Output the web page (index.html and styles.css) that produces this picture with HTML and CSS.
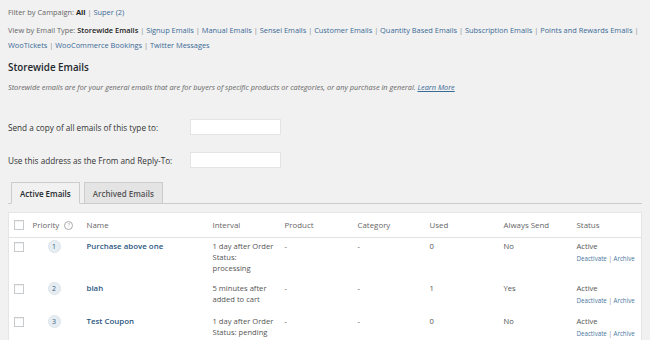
FILE: index.html
```html
<!DOCTYPE html>
<html lang="en">

<head>
    <meta charset="UTF-8" />
    <title>Follow-up Emails</title>
    <link rel="stylesheet" href="styles.css">
</head>

<body>
    <div class="wrap">
        <p class="filter">Filter by Campaign: <strong>All</strong> <span class="sep">|</span> <a href="#">Super (2)</a></p>

        <p class="types">View by Email Type: <strong>Storewide Emails</strong> <span class="sep">|</span>
            <a href="#">Signup Emails</a> <span class="sep">|</span>
            <a href="#">Manual Emails</a> <span class="sep">|</span>
            <a href="#">Sensei Emails</a> <span class="sep">|</span>
            <a href="#">Customer Emails</a> <span class="sep">|</span>
            <a href="#">Quantity Based Emails</a> <span class="sep">|</span>
            <a href="#">Subscription Emails</a> <span class="sep">|</span>
            <a href="#">Points and Rewards Emails</a> <span class="sep">|</span>
            <a href="#">WooTickets</a> <span class="sep">|</span>
            <a href="#">WooCommerce Bookings</a> <span class="sep">|</span>
            <a href="#">Twitter Messages</a>
        </p>

        <h3>Storewide Emails</h3>
        <p class="desc"><em>Storewide emails are for your general emails that are for buyers of specific products or categories, or any purchase in general.</em> <a href="#">Learn More</a></p>

        <div class="field first">
            <label for="bcc">Send a copy of all emails of this type to:</label>
            <input type="text" id="bcc" />
        </div>
        <div class="field">
            <label for="from">Use this address as the From and Reply-To:</label>
            <input type="text" id="from" />
        </div>

        <nav class="tabs">
            <a href="#" class="tab active">Active Emails</a>
            <a href="#" class="tab">Archived Emails</a>
        </nav>

        <table class="emails">
            <colgroup>
                <col style="width: 24px">
                <col style="width: 54px">
                <col style="width: 126px">
                <col style="width: 72px">
                <col style="width: 73px">
                <col style="width: 72px">
                <col style="width: 74px">
                <col style="width: 73px">
                <col>
            </colgroup>
            <thead>
                <tr>
                    <th class="check"><span class="box"></span></th>
                    <th>Priority <span class="help">?</span></th>
                    <th>Name</th>
                    <th>Interval</th>
                    <th>Product</th>
                    <th>Category</th>
                    <th>Used</th>
                    <th>Always Send</th>
                    <th>Status</th>
                </tr>
            </thead>
            <tbody>
                <tr>
                    <td class="check"><span class="box"></span></td>
                    <td><span class="prio">1</span></td>
                    <td><a href="#" class="name">Purchase above one</a></td>
                    <td class="interval">1 day after Order Status: processing</td>
                    <td class="dash">-</td>
                    <td class="dash">-</td>
                    <td>0</td>
                    <td>No</td>
                    <td>Active<div class="actions"><a href="#">Deactivate</a> <span class="sep">|</span> <a href="#">Archive</a></div></td>
                </tr>
                <tr>
                    <td class="check"><span class="box"></span></td>
                    <td><span class="prio">2</span></td>
                    <td><a href="#" class="name">blah</a></td>
                    <td class="interval">5 minutes after added to cart</td>
                    <td class="dash">-</td>
                    <td class="dash">-</td>
                    <td>1</td>
                    <td>Yes</td>
                    <td>Active<div class="actions"><a href="#">Deactivate</a> <span class="sep">|</span> <a href="#">Archive</a></div></td>
                </tr>
                <tr>
                    <td class="check"><span class="box"></span></td>
                    <td><span class="prio">3</span></td>
                    <td><a href="#" class="name">Test Coupon</a></td>
                    <td class="interval">1 day after Order Status: pending</td>
                    <td class="dash">-</td>
                    <td class="dash">-</td>
                    <td>0</td>
                    <td>No</td>
                    <td>Active<div class="actions"><a href="#">Deactivate</a> <span class="sep">|</span> <a href="#">Archive</a></div></td>
                </tr>
            </tbody>
        </table>
    </div>
</body>

</html>
```

FILE: styles.css
```css
html,
body {
    overflow: hidden;
}

body {
    margin: 0;
    font-family: "Open Sans", Arial, sans-serif;
    font-size: 7.4px;
    color: #444;
    background-color: #f1f1f1;
}

a {
    color: #3a6a96;
    text-decoration: none;
}

.wrap {
    padding: 5px 8px 0;
}

.sep {
    color: #888;
}

.filter {
    margin: 0;
    line-height: 15px;
    color: #666;
}

.filter strong {
    color: #222;
}

.types {
    margin: 3px 0 0;
    line-height: 15px;
    color: #666;
}

.types strong {
    color: #222;
    font-weight: 600;
}

h3 {
    margin: 7px 0 0;
    font-size: 9.8px;
    font-weight: 600;
    line-height: 15px;
    color: #23282d;
}

.desc {
    margin: 6px 0 0;
    line-height: 12px;
    font-size: 7.35px;
    color: #666;
}

.desc a {
    font-style: italic;
    text-decoration: underline;
}

.field {
    display: flex;
    align-items: center;
    margin-top: 17px;
    font-size: 8.2px;
}

.field.first {
    margin-top: 26px;
}

.field label {
    width: 182px;
    color: #333;
}

.field input {
    width: 91px;
    height: 16px;
    box-sizing: border-box;
    border: 1px solid #e4e4e4;
    background: #fff;
    padding: 0 4px;
}

.tabs {
    display: flex;
    gap: 4px;
    margin-top: 14px;
    padding-left: 3px;
    border-bottom: 1px solid #ccc;
}

.tab {
    height: 21px;
    padding: 0 8px;
    display: flex;
    align-items: center;
    font-size: 8px;
    font-weight: 600;
    color: #555;
    background-color: #e4e4e4;
    border: 1px solid #ccc;
    border-bottom: none;
    margin-bottom: -1px;
    box-sizing: border-box;
}

.tab.active {
    height: 22px;
    color: #23282d;
    background-color: #f1f1f1;
    border-bottom: 1px solid #f1f1f1;
}

.emails {
    margin-top: 8px;
    width: 634px;
    table-layout: fixed;
    border-collapse: collapse;
    background-color: #fff;
    border: 1px solid #e5e5e5;
    box-shadow: 0 1px 1px rgba(0, 0, 0, 0.04);
    font-size: 7.6px;
}

.emails th {
    height: 24px;
    padding: 0;
    text-align: left;
    font-weight: normal;
    font-size: 7.9px;
    color: #666;
    border-bottom: 1px solid #e1e1e1;
}

.emails td {
    padding: 3px 0 6px 0;
    vertical-align: top;
    line-height: 11px;
    color: #555;
}

.emails td.interval {
    padding-right: 10px;
}

.emails .check {
    padding-left: 5px;
}

.emails td.check {
    padding-top: 4px;
}

.box {
    display: block;
    width: 10px;
    height: 10px;
    box-sizing: border-box;
    border: 1px solid #c8cbce;
    background: #fff;
    box-shadow: inset 0 1px 1px rgba(0, 0, 0, 0.06);
}

.help {
    display: inline-block;
    width: 7px;
    height: 7px;
    margin-left: 3px;
    border: 1px solid #aaa;
    border-radius: 50%;
    font-size: 5px;
    line-height: 7px;
    text-align: center;
    color: #999;
    vertical-align: 1px;
}

.prio {
    display: block;
    width: 13px;
    height: 13px;
    margin-left: 15px;
    margin-top: -1px;
    border-radius: 50%;
    background-color: #e6edf3;
    border: 1px solid #dbe3ea;
    box-sizing: border-box;
    text-align: center;
    line-height: 11px;
    font-size: 7px;
    color: #3a5a78;
}

.name {
    font-size: 7.9px;
    font-weight: 600;
    color: #2b5783;
}

.dash {
    color: #aaa;
}

.actions {
    font-size: 6.2px;
    line-height: 13px;
    white-space: nowrap;
}

.actions a {
    color: #4b76a0;
}
```
